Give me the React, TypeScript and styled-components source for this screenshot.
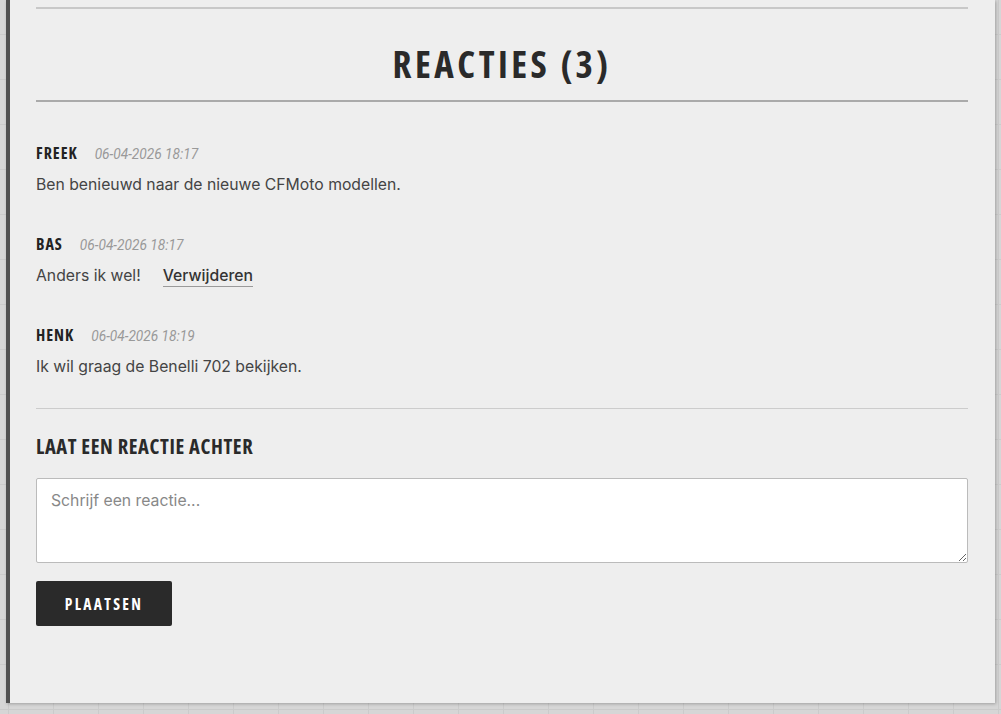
import styled, { createGlobalStyle } from 'styled-components'

const GlobalStyle = createGlobalStyle`
  html, body {
    margin: 0;
    padding: 0;
  }
  body {
    height: 714px;
    overflow: hidden;
    background-color: #d6d6d6;
    background-image:
      linear-gradient(to right, #cbcbcb 1px, transparent 1px),
      linear-gradient(to bottom, #cbcbcb 1px, transparent 1px);
    background-size: 45px 45px;
    background-position: 8px 34px;
    font-family: Inter, Roboto, 'Liberation Sans', sans-serif;
  }
`

// narrow display face for headings and names
const condensed = `'Open Sans', 'DejaVu Sans', sans-serif`

type Comment = {
  name: string
  date: string
  text: string
  own?: boolean
}

const comments: Comment[] = [
  { name: 'Freek', date: '06-04-2026 18:17', text: 'Ben benieuwd naar de nieuwe CFMoto modellen.' },
  { name: 'Bas', date: '06-04-2026 18:17', text: 'Anders ik wel!', own: true },
  { name: 'Henk', date: '06-04-2026 18:19', text: 'Ik wil graag de Benelli 702 bekijken.' },
]

const Panel = styled.section`
  margin-left: 6px;
  width: 989px;
  height: 703px;
  box-sizing: border-box;
  background: #eeeeee;
  border-left: 4px solid #505050;
  box-shadow: 1px 1px 3px rgba(0, 0, 0, 0.25);
  padding: 7px 27px 0 26px;
`

const TopRule = styled.hr`
  margin: 0;
  border: none;
  border-top: 2px solid #c8c8c8;
`

const Title = styled.h2`
  margin: 0;
  padding: 35px 0 16px;
  text-align: center;
  font-family: ${condensed};
  font-stretch: 75%;
  font-weight: 700;
  font-size: 37px;
  line-height: 40px;
  letter-spacing: 3.5px;
  color: #2a2a2a;
  border-bottom: 2px solid #aaaaaa;
`

const List = styled.div`
  display: flex;
  flex-direction: column;
  gap: 34px;
  padding: 40px 0 27px;
  border-bottom: 1px solid #cccccc;
`

const Item = styled.article`
  display: flex;
  flex-direction: column;
  gap: 7px;
`

const Meta = styled.div`
  display: flex;
  align-items: baseline;
  gap: 17px;
  height: 22px;
`

const Name = styled.span`
  font-family: ${condensed};
  font-stretch: 75%;
  font-weight: 700;
  font-size: 16px;
  letter-spacing: 1px;
  text-transform: uppercase;
  color: #222;
`

const Stamp = styled.span`
  font-family: Roboto, Inter, sans-serif;
  font-style: italic;
  font-size: 13.7px;
  color: #999999;
`

const Body = styled.p`
  margin: 0;
  font-size: 15.75px;
  line-height: 28px;
  color: #444444;
`

const DeleteLink = styled.a`
  margin-left: 22px;
  font-weight: 500;
  color: #333333;
  text-decoration: none;
  border-bottom: 1px solid #9a9a9a;
  padding-bottom: 1px;
  cursor: pointer;
`

const Form = styled.form`
  display: flex;
  flex-direction: column;
  align-items: flex-start;
  padding-top: 24px;
`

const FormTitle = styled.h3`
  margin: 0 0 19px;
  font-family: ${condensed};
  font-stretch: 75%;
  font-weight: 700;
  font-size: 20.5px;
  line-height: 26px;
  letter-spacing: 0.6px;
  color: #2a2a2a;
`

const Field = styled.textarea`
  width: 100%;
  height: 85px;
  box-sizing: border-box;
  padding: 12px 14px;
  border: 1px solid #bbbbbb;
  border-radius: 2px;
  background: #fff;
  font-family: Inter, Roboto, 'Liberation Sans', sans-serif;
  font-size: 15.75px;
  color: #333;
  resize: vertical;
  &::placeholder {
    color: #888;
  }
`

const Submit = styled.button`
  margin-top: 18px;
  width: 136px;
  height: 45px;
  border: none;
  border-radius: 2px;
  background: #2a2a2a;
  color: #fff;
  font-family: ${condensed};
  font-stretch: 75%;
  font-weight: 700;
  font-size: 15.5px;
  letter-spacing: 2.3px;
  cursor: pointer;
`

export default function App() {
  return (
    <>
      <GlobalStyle />
      <Panel>
        <TopRule />
        <Title>REACTIES ({comments.length})</Title>
        <List>
          {comments.map((c, i) => (
            <Item key={i}>
              <Meta>
                <Name>{c.name}</Name>
                <Stamp>{c.date}</Stamp>
              </Meta>
              <Body>
                {c.text}
                {c.own && <DeleteLink>Verwijderen</DeleteLink>}
              </Body>
            </Item>
          ))}
        </List>
        <Form onSubmit={(e) => e.preventDefault()}>
          <FormTitle>LAAT EEN REACTIE ACHTER</FormTitle>
          <Field placeholder="Schrijf een reactie..." />
          <Submit type="submit">PLAATSEN</Submit>
        </Form>
      </Panel>
    </>
  )
}
